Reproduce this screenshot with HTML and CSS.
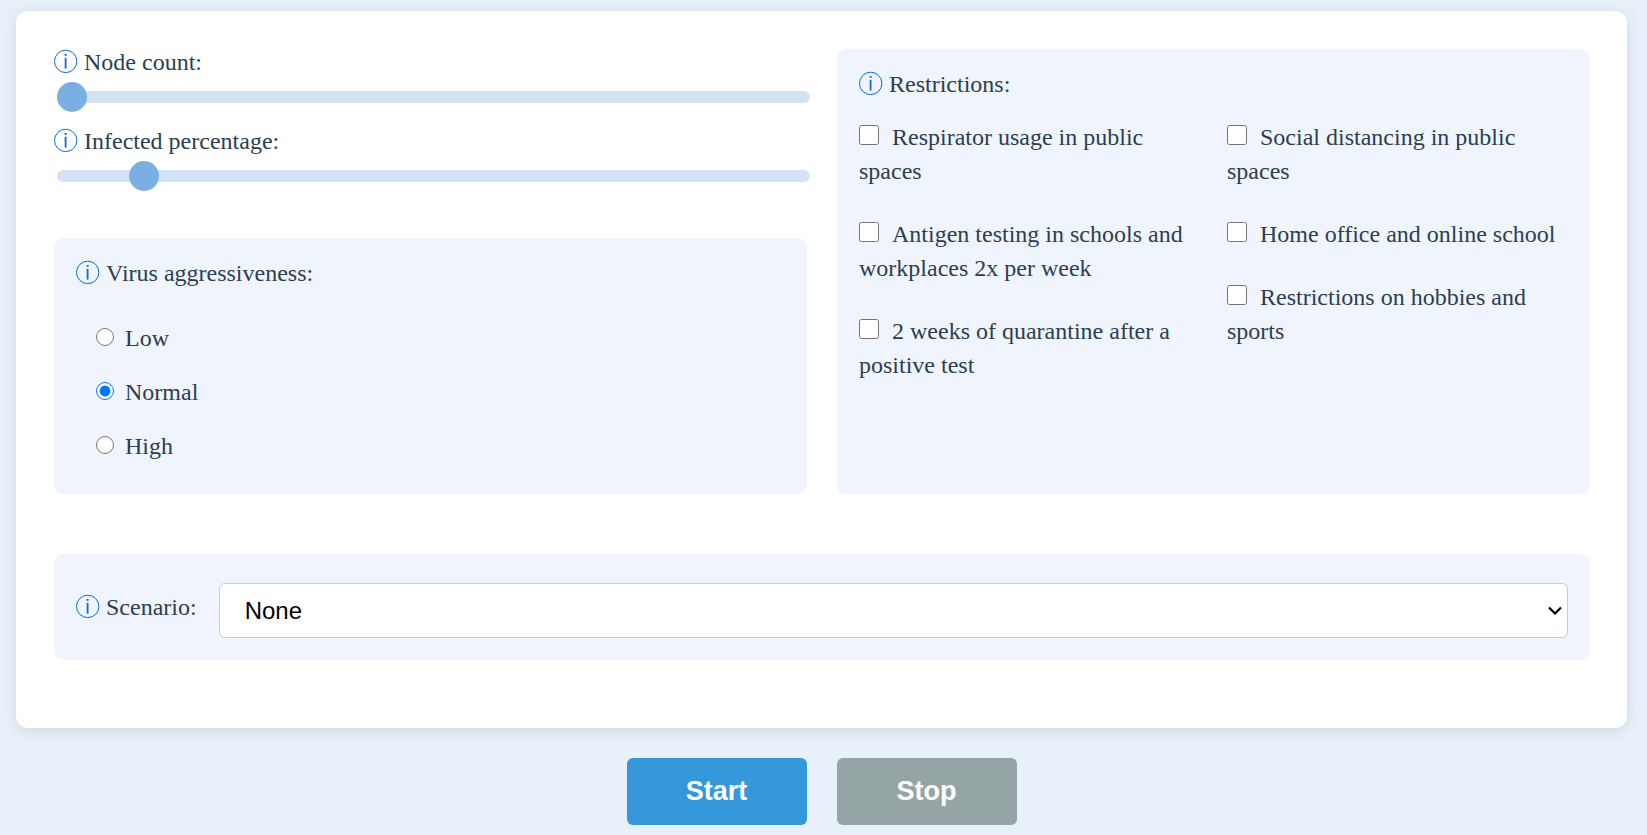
FILE: index.html
```html
<!DOCTYPE html>
<html lang="en">
<head>
<meta charset="utf-8">
<meta name="viewport" content="width=device-width, initial-scale=1">
<title>Epidemic simulation</title>
<link rel="stylesheet" href="styles.css">
</head>
<body>
<svg class="defs" aria-hidden="true">
  <symbol id="info" viewBox="0 0 24 24">
    <circle cx="11.7" cy="12.4" r="11.2" fill="none" stroke="currentColor" stroke-width="1"/>
    <rect x="10.6" y="5" width="2" height="1.8" fill="currentColor"/>
    <rect x="10.7" y="8.8" width="1.8" height="10.8" fill="currentColor"/>
  </symbol>
</svg>
<main class="page">
  <form class="card">
    <div class="settings">
      <div class="left">
        <div class="sliders">
          <div class="slider-field">
            <label class="title" for="nodes"><svg class="info"><use href="#info"/></svg>Node count:</label>
            <input class="slider" id="nodes" type="range" min="0" max="100" value="0">
          </div>
          <div class="slider-field">
            <label class="title" for="infected"><svg class="info"><use href="#info"/></svg>Infected percentage:</label>
            <input class="slider" id="infected" type="range" min="0" max="100" value="10">
          </div>
        </div>
        <section class="panel virus" role="radiogroup" aria-labelledby="virus-title">
          <div class="title" id="virus-title"><svg class="info"><use href="#info"/></svg>Virus aggressiveness:</div>
          <div class="radios">
            <label class="option"><input class="radio" type="radio" name="virus">Low</label>
            <label class="option"><input class="radio" type="radio" name="virus" checked>Normal</label>
            <label class="option"><input class="radio" type="radio" name="virus">High</label>
          </div>
        </section>
      </div>
      <section class="panel" role="group" aria-labelledby="restrictions-title">
        <div class="title" id="restrictions-title"><svg class="info"><use href="#info"/></svg>Restrictions:</div>
        <div class="columns">
          <div class="column">
            <label class="option"><input class="check" type="checkbox">Respirator usage in public spaces</label>
            <label class="option"><input class="check" type="checkbox">Antigen testing in schools and workplaces 2x per week</label>
            <label class="option"><input class="check" type="checkbox">2 weeks of quarantine after a positive test</label>
          </div>
          <div class="column">
            <label class="option"><input class="check" type="checkbox">Social distancing in public spaces</label>
            <label class="option"><input class="check" type="checkbox">Home office and online school</label>
            <label class="option"><input class="check" type="checkbox">Restrictions on hobbies and sports</label>
          </div>
        </div>
      </section>
    </div>
    <section class="panel scenario">
      <label class="title" for="scenario"><svg class="info"><use href="#info"/></svg>Scenario:</label>
      <div class="select-box">
        <select class="select" id="scenario">
          <option>None</option>
        </select>
        <svg class="arrow" viewBox="0 0 14 10" aria-hidden="true"><path d="M1 1.5 L7 7.5 L13 1.5" fill="none" stroke="#000" stroke-width="2.2"/></svg>
      </div>
    </section>
  </form>
  <div class="actions">
    <button class="button start" type="button">Start</button>
    <button class="button stop" type="button">Stop</button>
  </div>
</main>
</body>
</html>
```

FILE: styles.css
```css
* {
  box-sizing: border-box;
}

body {
  margin: 0;
  background: #e8f0fa;
  color: #2c3e50;
  font-family: "Liberation Serif", "Times New Roman", serif;
  font-size: 24px;
  line-height: 34px;
}

.defs {
  display: none;
}

.page {
  padding: 11px 20px 10px 16px;
}

.card {
  padding: 38px 37px 68px 38px;
  background: #fff;
  border-radius: 12px;
  box-shadow: 0 3px 15px rgba(0, 0, 0, 0.1);
}

.settings {
  display: grid;
  grid-template-columns: 1fr 1fr;
  gap: 30px;
}

.left {
  display: flex;
  flex-direction: column;
  gap: 56px;
}

.sliders {
  display: flex;
  flex-direction: column;
  gap: 25px;
}

.slider-field {
  display: flex;
  flex-direction: column;
  gap: 15px;
}

.title {
  display: flex;
  gap: 6px;
  line-height: 27px;
  white-space: nowrap;
}

.info {
  flex: none;
  width: 24px;
  height: 24px;
  color: #0b6bd3;
}

.slider {
  appearance: none;
  width: 100%;
  height: 12px;
  margin: 0 0 0 3px;
  background: #d4e3f3;
  border-radius: 6px;
}

.slider::-webkit-slider-thumb {
  appearance: none;
  width: 30px;
  height: 30px;
  background: #7baee2;
  border: 0;
  border-radius: 50%;
}

.slider::-moz-range-thumb {
  width: 30px;
  height: 30px;
  background: #7baee2;
  border: 0;
  border-radius: 50%;
}

.panel {
  padding: 22px;
  background: #f0f5fd;
  border-radius: 9px;
}

.virus {
  padding-bottom: 31px;
}

.radios {
  display: flex;
  flex-direction: column;
  gap: 20px;
  padding: 34px 20px 0;
}

.radio {
  width: 18px;
  height: 18px;
  margin: 0 11px 1px 0;
}

.columns {
  display: grid;
  grid-template-columns: 1fr 1fr;
  gap: 27px;
  padding-top: 22px;
}

.column {
  display: flex;
  flex-direction: column;
  gap: 29px;
}

.check {
  width: 20px;
  height: 20px;
  margin: 0 13px 0 0;
}

.scenario {
  display: flex;
  align-items: center;
  gap: 22px;
  margin-top: 60px;
}

.select-box {
  position: relative;
  display: flex;
  flex: 1;
  margin-top: 7px;
}

.select {
  appearance: none;
  flex: 1;
  min-width: 0;
  height: 55px;
  padding: 0 25px;
  background: #fff;
  border: 1px solid #b3d1ea;
  border-radius: 6px;
  color: #000;
  font-family: "Liberation Sans", Arial, sans-serif;
  font-size: 24px;
}

.arrow {
  position: absolute;
  top: 23px;
  right: 6px;
  width: 14px;
  height: 10px;
  pointer-events: none;
}

.actions {
  display: flex;
  justify-content: center;
  gap: 30px;
  padding-top: 30px;
}

.button {
  width: 180px;
  height: 67px;
  border: 0;
  border-radius: 6px;
  color: #fff;
  font-family: "Liberation Sans", Arial, sans-serif;
  font-size: 27px;
  font-weight: bold;
}

.start {
  background: #3498db;
}

.stop {
  background: #95a5a6;
}
```
